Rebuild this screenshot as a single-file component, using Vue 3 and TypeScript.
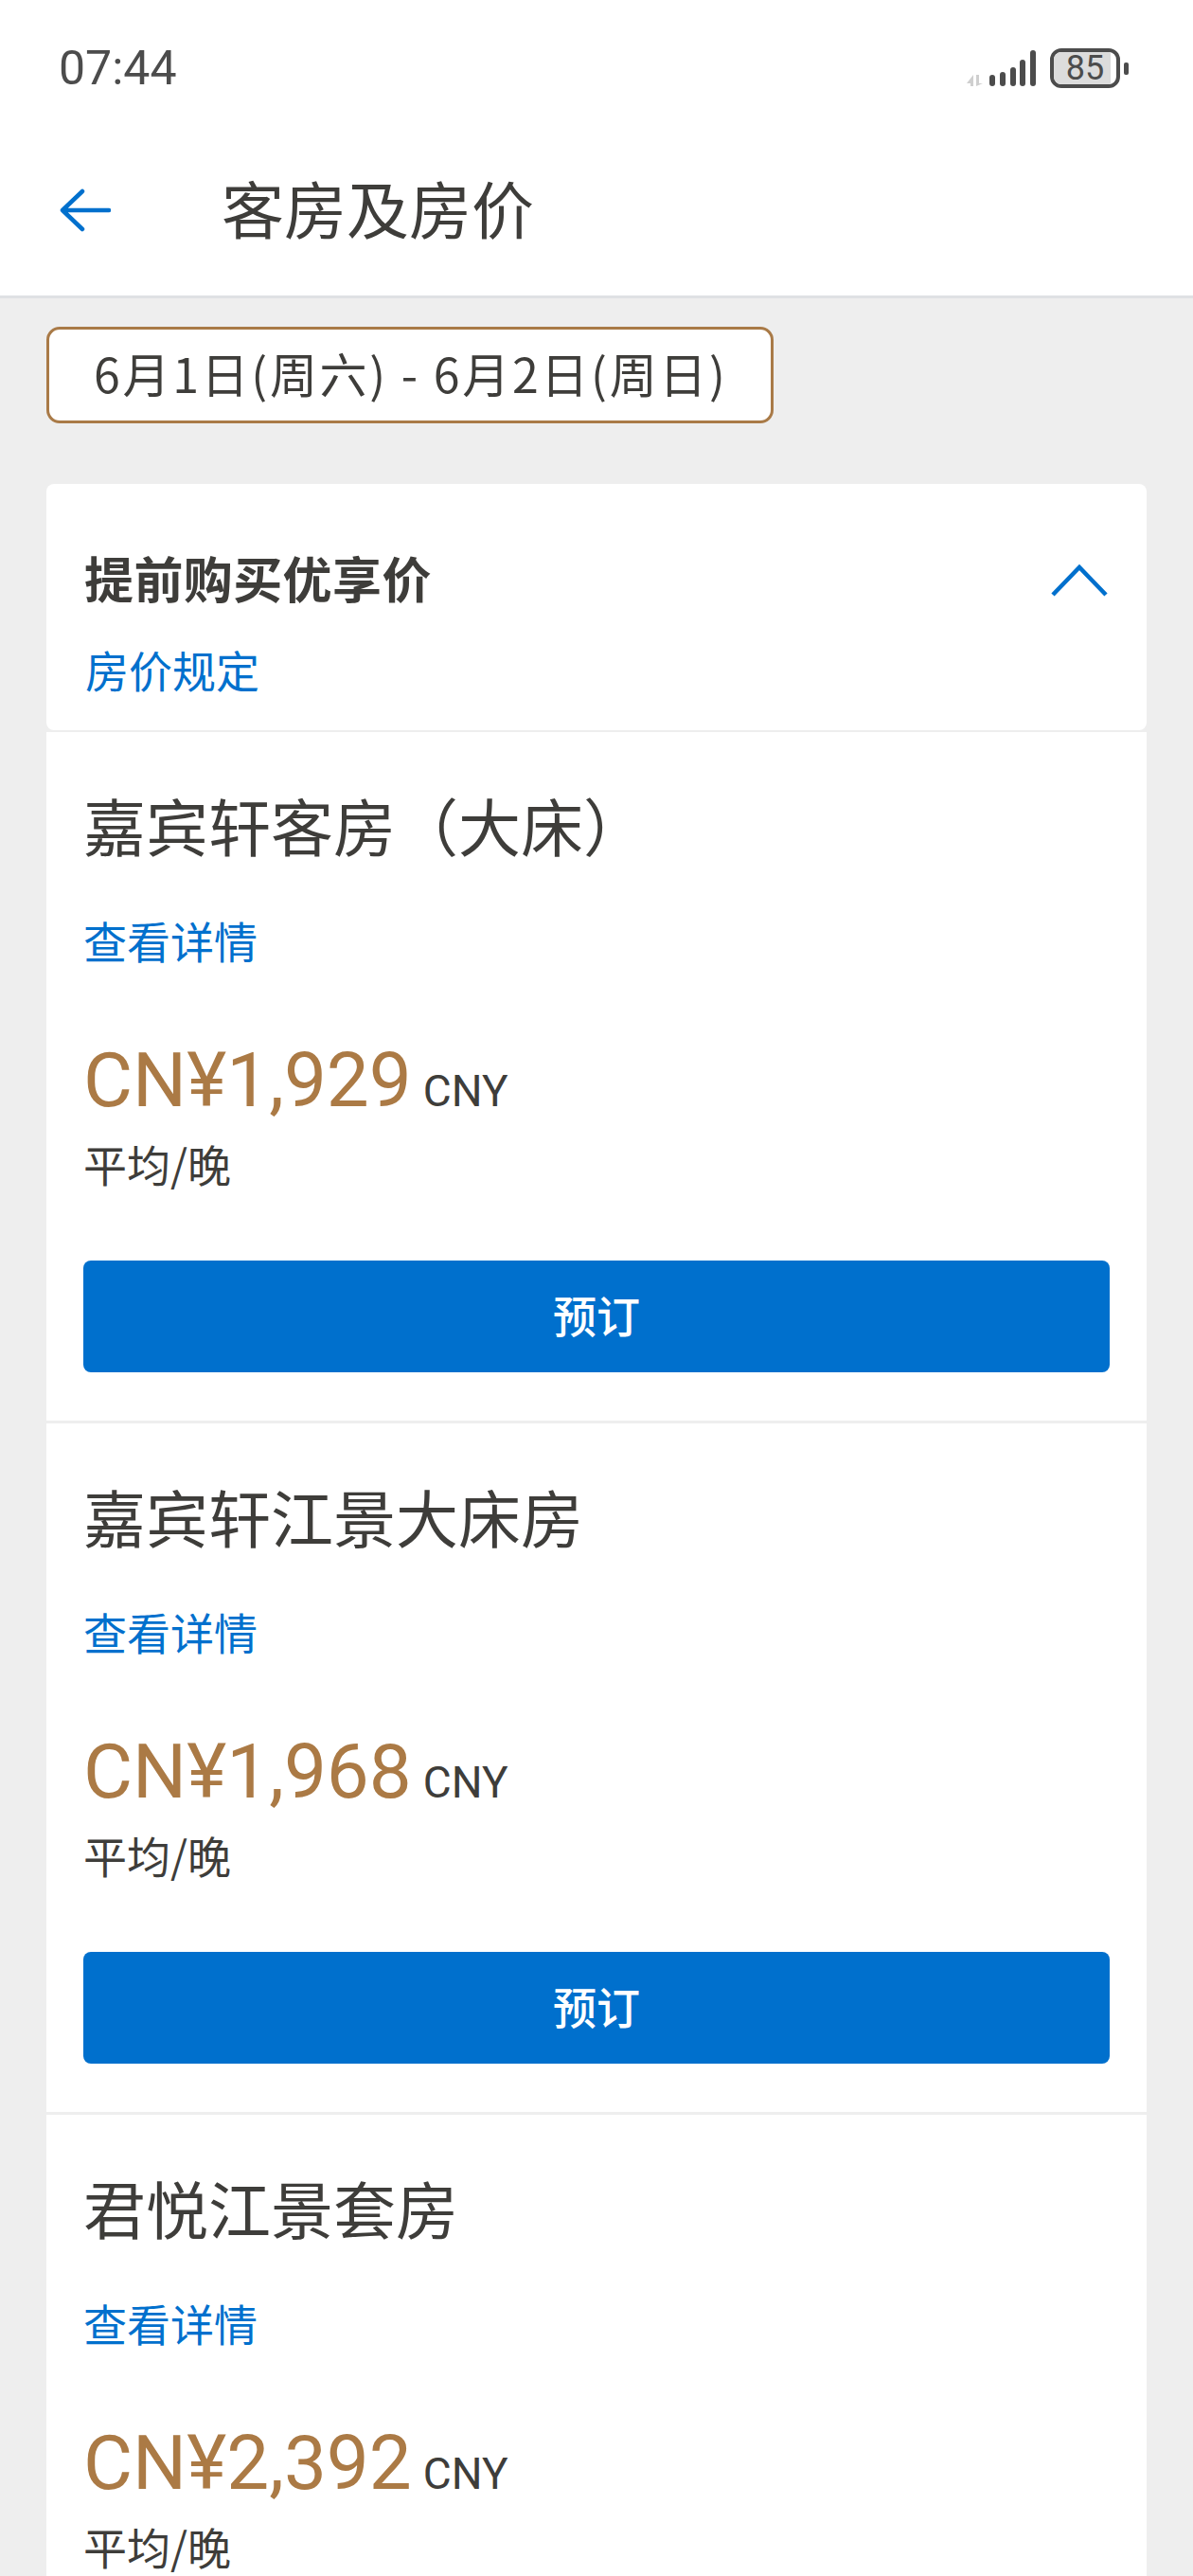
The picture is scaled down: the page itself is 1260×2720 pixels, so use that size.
<script setup lang="ts">
interface Room {
  name: string;
  price: string;
}

const rooms: Room[] = [
  { name: '嘉宾轩客房（大床）', price: 'CN¥1,929' },
  { name: '嘉宾轩江景大床房', price: 'CN¥1,968' },
  { name: '君悦江景套房', price: 'CN¥2,392' },
];

const bars = [
  { x: 24, y: 26, h: 12 },
  { x: 35, y: 23, h: 15 },
  { x: 46, y: 18, h: 20 },
  { x: 56, y: 10, h: 28 },
  { x: 67, y: 0, h: 38 },
];
</script>

<template>
  <div class="page">
    <header class="top">
      <div class="status">
        <span class="time">07:44</span>
        <div class="status-right">
          <svg class="signal" width="73" height="38" viewBox="0 0 73 38">
            <path d="M0 35 7 26V38H4V35ZM10 26H13V35H17L10 38Z" fill="#cfcfcf" />
            <rect
              v-for="b in bars"
              :key="b.x"
              :x="b.x"
              :y="b.y"
              width="6"
              :height="b.h"
              rx="3"
              fill="#4c4c4c"
            />
          </svg>
          <div class="battery">
            <div class="battery-level" />
            <span class="battery-num">85</span>
          </div>
          <div class="battery-cap" />
        </div>
      </div>
      <div class="nav">
        <svg class="back" width="54" height="46" viewBox="0 0 54 46">
          <path
            d="M52 23H3M24 3 3 23l21 20"
            fill="none"
            stroke="#0070cd"
            stroke-width="4.5"
            stroke-linecap="round"
            stroke-linejoin="round"
          />
        </svg>
        <h1 class="title">客房及房价</h1>
      </div>
    </header>

    <div class="dates">6月1日(周六) - 6月2日(周日)</div>

    <main class="list">
      <section class="rate">
        <div class="rate-head">
          <span class="rate-name">提前购买优享价</span>
          <svg class="chevron" width="60" height="36" viewBox="0 0 60 36">
            <path
              d="M2 33 30 4l28 29"
              fill="none"
              stroke="#0070cd"
              stroke-width="4.5"
            />
          </svg>
        </div>
        <a class="rate-rule">房价规定</a>
      </section>

      <section v-for="(room, i) in rooms" :key="room.name" class="room">
        <h2 class="room-name">{{ room.name }}</h2>
        <a class="room-link">查看详情</a>
        <div class="price-row">
          <span class="price">{{ room.price }}</span>
          <span class="currency">CNY</span>
        </div>
        <div class="per-night">平均/晚</div>
        <button v-if="i < 2" class="book" type="button">预订</button>
      </section>
    </main>
  </div>
</template>

<style>
body {
  margin: 0;
  background: #eeeeee;
}
</style>

<style scoped>
.page {
  height: 2720px;
  overflow: hidden;
  background: #eeeeee;
  color: #3e3d3a;
  font-family: "Noto Sans CJK SC", "Noto Sans", sans-serif;
}

.top {
  height: 312px;
  background: #fff;
  border-bottom: 3px solid #dfe1e4;
}

.status {
  height: 144px;
  padding: 0 62px;
  box-sizing: border-box;
  display: flex;
  align-items: center;
  justify-content: space-between;
}

.time {
  font-family: Roboto, sans-serif;
  font-weight: 450;
  font-size: 50px;
  line-height: 150px;
  color: #4c4c4c;
}

.status-right {
  display: flex;
  align-items: center;
  margin-right: 6px;
}

.signal {
  display: block;
  margin-right: 15px;
}

.battery {
  position: relative;
  width: 74px;
  height: 42px;
  box-sizing: border-box;
  border: 4px solid #4c4c4c;
  border-radius: 12px;
  overflow: hidden;
  display: flex;
  align-items: center;
  justify-content: center;
}

.battery-level {
  position: absolute;
  left: 0;
  top: 0;
  bottom: 0;
  width: 60px;
  background: #dcdcdc;
}

.battery-num {
  position: relative;
  font-family: Roboto, sans-serif;
  font-weight: 450;
  font-size: 36px;
  line-height: 34px;
  color: #4c4c4c;
}

.battery-cap {
  width: 5px;
  height: 13px;
  margin-left: 4px;
  border-radius: 2px;
  background: #4c4c4c;
}

.nav {
  display: flex;
  align-items: center;
  height: 156px;
  padding-left: 63px;
}

.back {
  display: block;
  flex: none;
}

.title {
  margin: 0 0 9px 117px;
  font-size: 66px;
  font-weight: 400;
  line-height: 90px;
}

.dates {
  height: 102px;
  margin: 30px 0 0 49px;
  padding: 0 0 0 47px;
  width: 768px;
  box-sizing: border-box;
  background: #fff;
  border: 3px solid #a97a47;
  border-radius: 14px;
  font-size: 50px;
  line-height: 90px;
  letter-spacing: 2.7px;
  white-space: nowrap;
}

.list {
  margin: 64px 49px 0;
}

.rate {
  height: 260px;
  padding: 63px 40px 0 40px;
  box-sizing: border-box;
  background: #fff;
  border-radius: 8px;
}

.rate-head {
  display: flex;
  align-items: center;
  justify-content: space-between;
  height: 70px;
}

.rate-name {
  font-size: 52px;
  font-weight: 700;
  letter-spacing: 0.4px;
}

.chevron {
  display: block;
  margin: 8px 1px 0 0;
}

.rate-rule {
  display: block;
  margin: 29px 0 0 1px;
  color: #0070cd;
  font-size: 46px;
  line-height: 66px;
}

.room {
  height: 727px;
  margin-top: 2px;
  padding: 0 39px;
  box-sizing: border-box;
  background: #fff;
}

.room + .room {
  margin-top: 3px;
}

.room-name {
  margin: 0;
  padding-top: 52px;
  font-size: 66px;
  font-weight: 400;
  line-height: 90px;
}

.room-link {
  display: block;
  margin-top: 45px;
  color: #0070cd;
  font-size: 46px;
  line-height: 64px;
}

.price-row {
  display: flex;
  align-items: baseline;
  margin-top: 67px;
  height: 100px;
}

.price {
  font-family: Roboto, sans-serif;
  font-size: 80px;
  line-height: 100px;
  color: #ab7a45;
}

.currency {
  margin-left: 12px;
  font-family: Roboto, sans-serif;
  font-size: 46px;
}

.per-night {
  margin-top: 7px;
  font-size: 46px;
  line-height: 60px;
}

.book {
  display: block;
  width: 100%;
  height: 118px;
  margin-top: 73px;
  padding: 0 0 6px;
  border: 0;
  border-radius: 8px;
  background: #0070cd;
  color: #fff;
  font-family: inherit;
  font-size: 46px;
  font-weight: 500;
}
</style>
